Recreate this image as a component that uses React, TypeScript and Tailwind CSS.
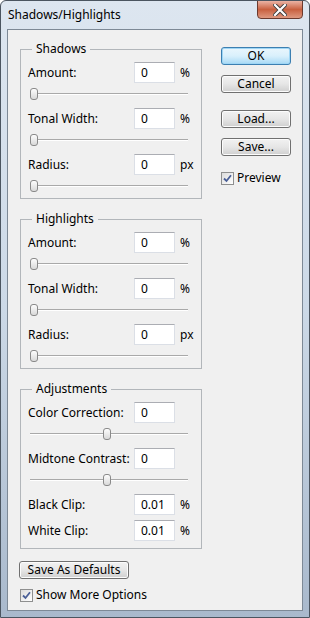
import React from 'react'

const font = "font-['Noto_Sans','Liberation_Sans',sans-serif]"

function Field({ label, value, unit }: { label: string; value: string; unit?: string }) {
  return (
    <div className="flex h-[21px] items-center">
      <span className="w-[106px] text-[12px] leading-[16px] text-black">{label}</span>
      <div className="flex h-[21px] w-[41px] items-center border border-[#dbdfe6] border-t-[#abadb3] bg-white pl-[6px] text-[12px] leading-[16px] text-black">
        {value}
      </div>
      {unit && <span className="ml-[5px] text-[12px] leading-[16px] text-black">{unit}</span>}
    </div>
  )
}

function Slider({ pos, last }: { pos: number; last?: boolean }) {
  return (
    <div className={last ? 'h-[23px] pl-[2px] pt-[10px]' : 'h-[25px] pl-[2px] pt-[10px]'}>
      <div className="relative h-[2px] w-[158px] border-t border-[#a9a9a9] bg-white">
        <div
          className="absolute top-[-6px] h-[12px] w-[8px] rounded-[3px] border border-[#8a8a8a] bg-gradient-to-b from-[#fdfdfd] to-[#d9d9d9]"
          style={{ left: pos }}
        />
      </div>
    </div>
  )
}

function Group({ title, children }: { title: string; children: React.ReactNode }) {
  return (
    <div className="relative border border-[#b2b6ba] pl-[7px] pt-[12px]">
      <span className="absolute left-[11px] top-[-9px] bg-[#f0f0f0] px-[4px] text-[12px] leading-[16px] text-black">
        {title}
      </span>
      {children}
    </div>
  )
}

function Button({ children, primary, className = '' }: { children: React.ReactNode; primary?: boolean; className?: string }) {
  return (
    <button
      className={
        'flex h-[18px] items-center justify-center rounded-[3px] border text-[12px] leading-[16px] text-black ' +
        (primary
          ? 'border-[#3c7fb1] bg-gradient-to-b from-[#eaf6fd] via-[#d9f0fc] to-[#a7d9f5] shadow-[inset_0_0_0_1px_#9fd6f5] '
          : 'border-[#707070] bg-gradient-to-b from-[#f2f2f2] via-[#e6e6e6] to-[#cfcfcf] shadow-[inset_0_0_0_1px_#fcfcfc] ') +
        className
      }
    >
      {children}
    </button>
  )
}

function Checkbox({ label }: { label: string }) {
  return (
    <div className="flex h-[16px] items-center">
      <div className="flex h-[13px] w-[13px] items-center justify-center border border-[#8e8f8f] bg-gradient-to-br from-[#dcdcdc] to-[#ffffff]">
        <svg width="9" height="9" viewBox="0 0 9 9">
          <path d="M1 4.5 L3.5 7 L8 1.2" fill="none" stroke="#4a5f97" strokeWidth="1.8" />
        </svg>
      </div>
      <span className="ml-[3px] text-[12px] leading-[16px] text-black">{label}</span>
    </div>
  )
}

export default function App() {
  return (
    <div className={`${font} h-[618px] w-[310px] overflow-hidden rounded-t-[6px] border border-[#4b5560] bg-gradient-to-b from-[#dde6f0] via-[#ccd9e7] to-[#a9b9cc]`}>
      <div className="flex h-[28px] items-start justify-between">
        <div className="flex h-[28px] items-center pl-[7px] text-[12px] text-black">Shadows/Highlights</div>
        <div className="mr-[6px] mt-[-1px] flex h-[19px] w-[46px] items-center justify-center rounded-b-[4px] border border-[#6b3a2e] bg-gradient-to-b from-[#eab3a4] via-[#c8603f] to-[#de9880]">
          <svg width="14" height="12" viewBox="0 0 14 12">
            <path d="M2 1 L12 11 M12 1 L2 11" stroke="#3d3d3d" strokeWidth="4" strokeLinecap="square" />
            <path d="M2 1 L12 11 M12 1 L2 11" stroke="#ffffff" strokeWidth="2.2" strokeLinecap="square" />
          </svg>
        </div>
      </div>

      <div className="mx-[6px] h-[582px] border border-[#7d8996] bg-[#f0f0f0]">
        <div className="flex pl-[12px] pt-[17px]">
          <div className="w-[182px] pt-[2px]">
            <Group title="Shadows">
              <Field label="Amount:" value="0" unit="%" />
              <Slider pos={0} />
              <Field label="Tonal Width:" value="0" unit="%" />
              <Slider pos={0} />
              <Field label="Radius:" value="0" unit="px" />
              <Slider pos={0} last />
            </Group>

            <div className="mt-[20px]">
              <Group title="Highlights">
                <Field label="Amount:" value="0" unit="%" />
                <Slider pos={0} />
                <Field label="Tonal Width:" value="0" unit="%" />
                <Slider pos={0} />
                <Field label="Radius:" value="0" unit="px" />
                <Slider pos={0} last />
              </Group>
            </div>

            <div className="mt-[20px]">
              <Group title="Adjustments">
                <div className="pb-[7px]">
                  <Field label="Color Correction:" value="0" />
                  <Slider pos={73} />
                  <Field label="Midtone Contrast:" value="0" />
                  <Slider pos={73} />
                  <Field label="Black Clip:" value="0.01" unit="%" />
                  <div className="mt-[5px]">
                    <Field label="White Clip:" value="0.01" unit="%" />
                  </div>
                </div>
              </Group>
            </div>

            <Button className="ml-[-1px] mt-[12px] w-[110px]">Save As Defaults</Button>
            <div className="mt-[8px]">
              <Checkbox label="Show More Options" />
            </div>
          </div>

          <div className="ml-[19px] w-[70px]">
            <Button primary className="w-[70px]">OK</Button>
            <Button className="mt-[10px] w-[70px]">Cancel</Button>
            <Button className="mt-[17px] w-[70px]">Load...</Button>
            <Button className="mt-[10px] w-[70px]">Save...</Button>
            <div className="mt-[14px]">
              <Checkbox label="Preview" />
            </div>
          </div>
        </div>
      </div>
    </div>
  )
}
